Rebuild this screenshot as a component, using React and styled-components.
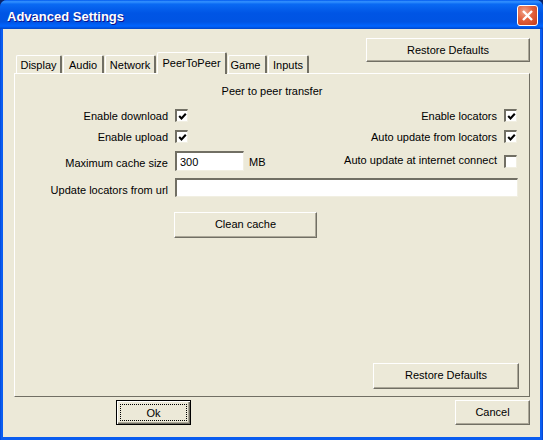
import React from "react";
import styled, { createGlobalStyle, css } from "styled-components";

const Global = createGlobalStyle`
  html, body {
    margin: 0;
    padding: 0;
    background: #0a246a;
  }
  * {
    box-sizing: border-box;
  }
`;

const Window = styled.div`
  width: 543px;
  height: 440px;
  display: flex;
  flex-direction: column;
  font-family: "Liberation Sans", Arial, sans-serif;
  font-size: 11px;
  color: #000;
  background: linear-gradient(90deg, #0040d0 0, #0a5df0 1px, #0a5df0 542px, #0033b8 543px);
  border-radius: 7px 7px 0 0;
  overflow: hidden;
`;

const TitleBar = styled.div`
  height: 29px;
  flex: none;
  display: flex;
  align-items: center;
  justify-content: space-between;
  padding: 2px 5px 0 7px;
  background: linear-gradient(
    180deg,
    #0058ee 0%,
    #3593ff 6%,
    #0a6af3 14%,
    #0055e5 45%,
    #0054e3 75%,
    #0064ff 90%,
    #0046c8 100%
  );
`;

const Title = styled.span`
  color: #fff;
  font-family: "Liberation Sans", Arial, sans-serif;
  font-size: 13px;
  font-weight: bold;
  margin-top: 1px;
  text-shadow: 1px 1px 0 #0f1089;
`;

const CloseButton = styled.div`
  width: 21px;
  height: 21px;
  display: flex;
  align-items: center;
  justify-content: center;
  border: 1px solid #fff;
  border-radius: 3px;
  background: radial-gradient(circle at 35% 30%, #f0a48a 0%, #e2613d 45%, #c53a17 100%);
`;

const Body = styled.div`
  flex: 1;
  margin: 0 3px 3px 3px;
  padding: 9px 10px 0 11px;
  display: flex;
  flex-direction: column;
  background: #ece9d8;
`;

const Header = styled.div`
  height: 35px;
  flex: none;
  display: flex;
  justify-content: space-between;
  align-items: flex-end;
`;

const Tabs = styled.div`
  display: flex;
  align-items: flex-end;
  padding-left: 2px;
  gap: 1px;
  position: relative;
  z-index: 1;
`;

const Tab = styled.div`
  width: ${(p) => p.$width}px;
  height: 18px;
  display: flex;
  align-items: center;
  justify-content: center;
  padding-right: ${(p) => p.$inset || 0}px;
  border-top: 1px solid #fff;
  border-left: 1px solid #fff;
  border-right: 2px solid #716f64;
  border-radius: 2px 2px 0 0;
  background: #ece9d8;
  ${(p) =>
    p.$active &&
    css`
      height: 22px;
      margin-bottom: -1px;
      padding-bottom: 2px;
    `}
`;

const Button = styled.div`
  display: flex;
  align-items: center;
  justify-content: center;
  width: ${(p) => p.$width}px;
  height: ${(p) => p.$height}px;
  padding-bottom: 2px;
  background: #ece9d8;
  border-top: 1px solid #fff;
  border-left: 1px solid #fff;
  border-right: 1px solid #716f64;
  border-bottom: 1px solid #716f64;
  box-shadow: inset -1px -1px 0 #aca899;
`;

const HeaderButton = styled(Button)`
  align-self: flex-start;
  padding-bottom: 0;
`;

const DefaultButton = styled(Button)`
  border: 1px solid #000;
  box-shadow: inset 1px 1px 0 #fff, inset -1px -1px 0 #716f64, inset -2px -2px 0 #aca899;
  padding: 3px;
`;

const FocusRing = styled.div`
  width: 100%;
  height: 100%;
  display: flex;
  align-items: center;
  justify-content: center;
  border: 1px dotted #000;
`;

const Panel = styled.div`
  height: 324px;
  flex: none;
  display: flex;
  flex-direction: column;
  padding-top: 11px;
  border-top: 1px solid #fff;
  border-left: 1px solid #fff;
  border-right: 1px solid #716f64;
  border-bottom: 1px solid #716f64;
`;

const Heading = styled.div`
  text-align: center;
  height: 13px;
  line-height: 13px;
  margin-bottom: 11px;
`;

const Row = styled.div`
  display: flex;
  align-items: center;
  height: ${(p) => p.$height}px;
  margin-top: ${(p) => p.$top || 0}px;
`;

const Label = styled.span`
  width: 153px;
  flex: none;
  text-align: right;
  margin-right: 7px;
  margin-top: ${(p) => p.$drop || 0}px;
`;

const RightLabel = styled.span`
  margin-left: auto;
  margin-right: 7px;
  margin-bottom: ${(p) => p.$raise || 0}px;
`;

const Sunken = css`
  background: #fff;
  border-top: 2px solid #716f64;
  border-left: 2px solid #716f64;
  border-right: 1px solid #f1efe2;
  border-bottom: 1px solid #f1efe2;
`;

const Box = styled.div`
  ${Sunken}
  width: 13px;
  height: 13px;
  flex: none;
  display: flex;
  align-items: center;
  justify-content: center;
  margin-right: ${(p) => p.$right || 0}px;
`;

const Input = styled.div`
  ${Sunken}
  width: ${(p) => p.$width}px;
  height: ${(p) => p.$height}px;
  flex: none;
  padding-left: 3px;
  display: flex;
  align-items: center;
`;

const Unit = styled.span`
  margin: 2px 0 0 5px;
`;

const ButtonRow = styled.div`
  display: flex;
  padding-left: ${(p) => p.$left || 0}px;
  padding-right: ${(p) => p.$right || 0}px;
  margin-top: ${(p) => p.$top || 0}px;
  justify-content: ${(p) => (p.$end ? "flex-end" : "flex-start")};
`;

const Footer = styled.div`
  display: flex;
  justify-content: space-between;
  padding-left: 102px;
  margin-top: 3px;
`;

const Check = ({ on }) => (
  <Box $right={12}>
    {on && (
      <svg width="9" height="9" viewBox="0 0 9 9">
        <path d="M1.2 4 L3.5 6.4 L7.8 1.8" fill="none" stroke="#000" strokeWidth="2.1" />
      </svg>
    )}
  </Box>
);

export default function App() {
  return (
    <Window>
      <Global />
      <TitleBar>
        <Title>Advanced Settings</Title>
        <CloseButton>
          <svg width="13" height="13" viewBox="0 0 13 13">
            <path d="M2 2 L11 11 M11 2 L2 11" stroke="#fff" strokeWidth="2.4" />
          </svg>
        </CloseButton>
      </TitleBar>
      <Body>
        <Header>
          <Tabs>
            <Tab $width={46}>Display</Tab>
            <Tab $width={41}>Audio</Tab>
            <Tab $width={51}>Network</Tab>
            <Tab $width={70} $active>PeerToPeer</Tab>
            <Tab $width={39} $inset={3}>Game</Tab>
            <Tab $width={41}>Inputs</Tab>
          </Tabs>
          <HeaderButton $width={164} $height={24}>Restore Defaults</HeaderButton>
        </Header>
        <Panel>
          <Heading>Peer to peer transfer</Heading>
          <Row $height={13}>
            <Label>Enable download</Label>
            <Check on />
            <RightLabel>Enable locators</RightLabel>
            <Check on />
          </Row>
          <Row $height={13} $top={8}>
            <Label>Enable upload</Label>
            <Check on />
            <RightLabel>Auto update from locators</RightLabel>
            <Check on />
          </Row>
          <Row $height={20} $top={8}>
            <Label $drop={4}>Maximum cache size</Label>
            <Input $width={69} $height={20}>300</Input>
            <Unit>MB</Unit>
            <RightLabel $raise={2}>Auto update at internet connect</RightLabel>
            <Check />
          </Row>
          <Row $height={19} $top={7}>
            <Label $drop={5}>Update locators from url</Label>
            <Input $width={343} $height={19} />
          </Row>
          <ButtonRow $left={159} $top={15}>
            <Button $width={143} $height={26}>Clean cache</Button>
          </ButtonRow>
          <ButtonRow $end $right={10} $top={125}>
            <Button $width={146} $height={26}>Restore Defaults</Button>
          </ButtonRow>
        </Panel>
        <Footer>
          <DefaultButton $width={75} $height={25}>
            <FocusRing>Ok</FocusRing>
          </DefaultButton>
          <Button $width={75} $height={25}>Cancel</Button>
        </Footer>
      </Body>
    </Window>
  );
}
